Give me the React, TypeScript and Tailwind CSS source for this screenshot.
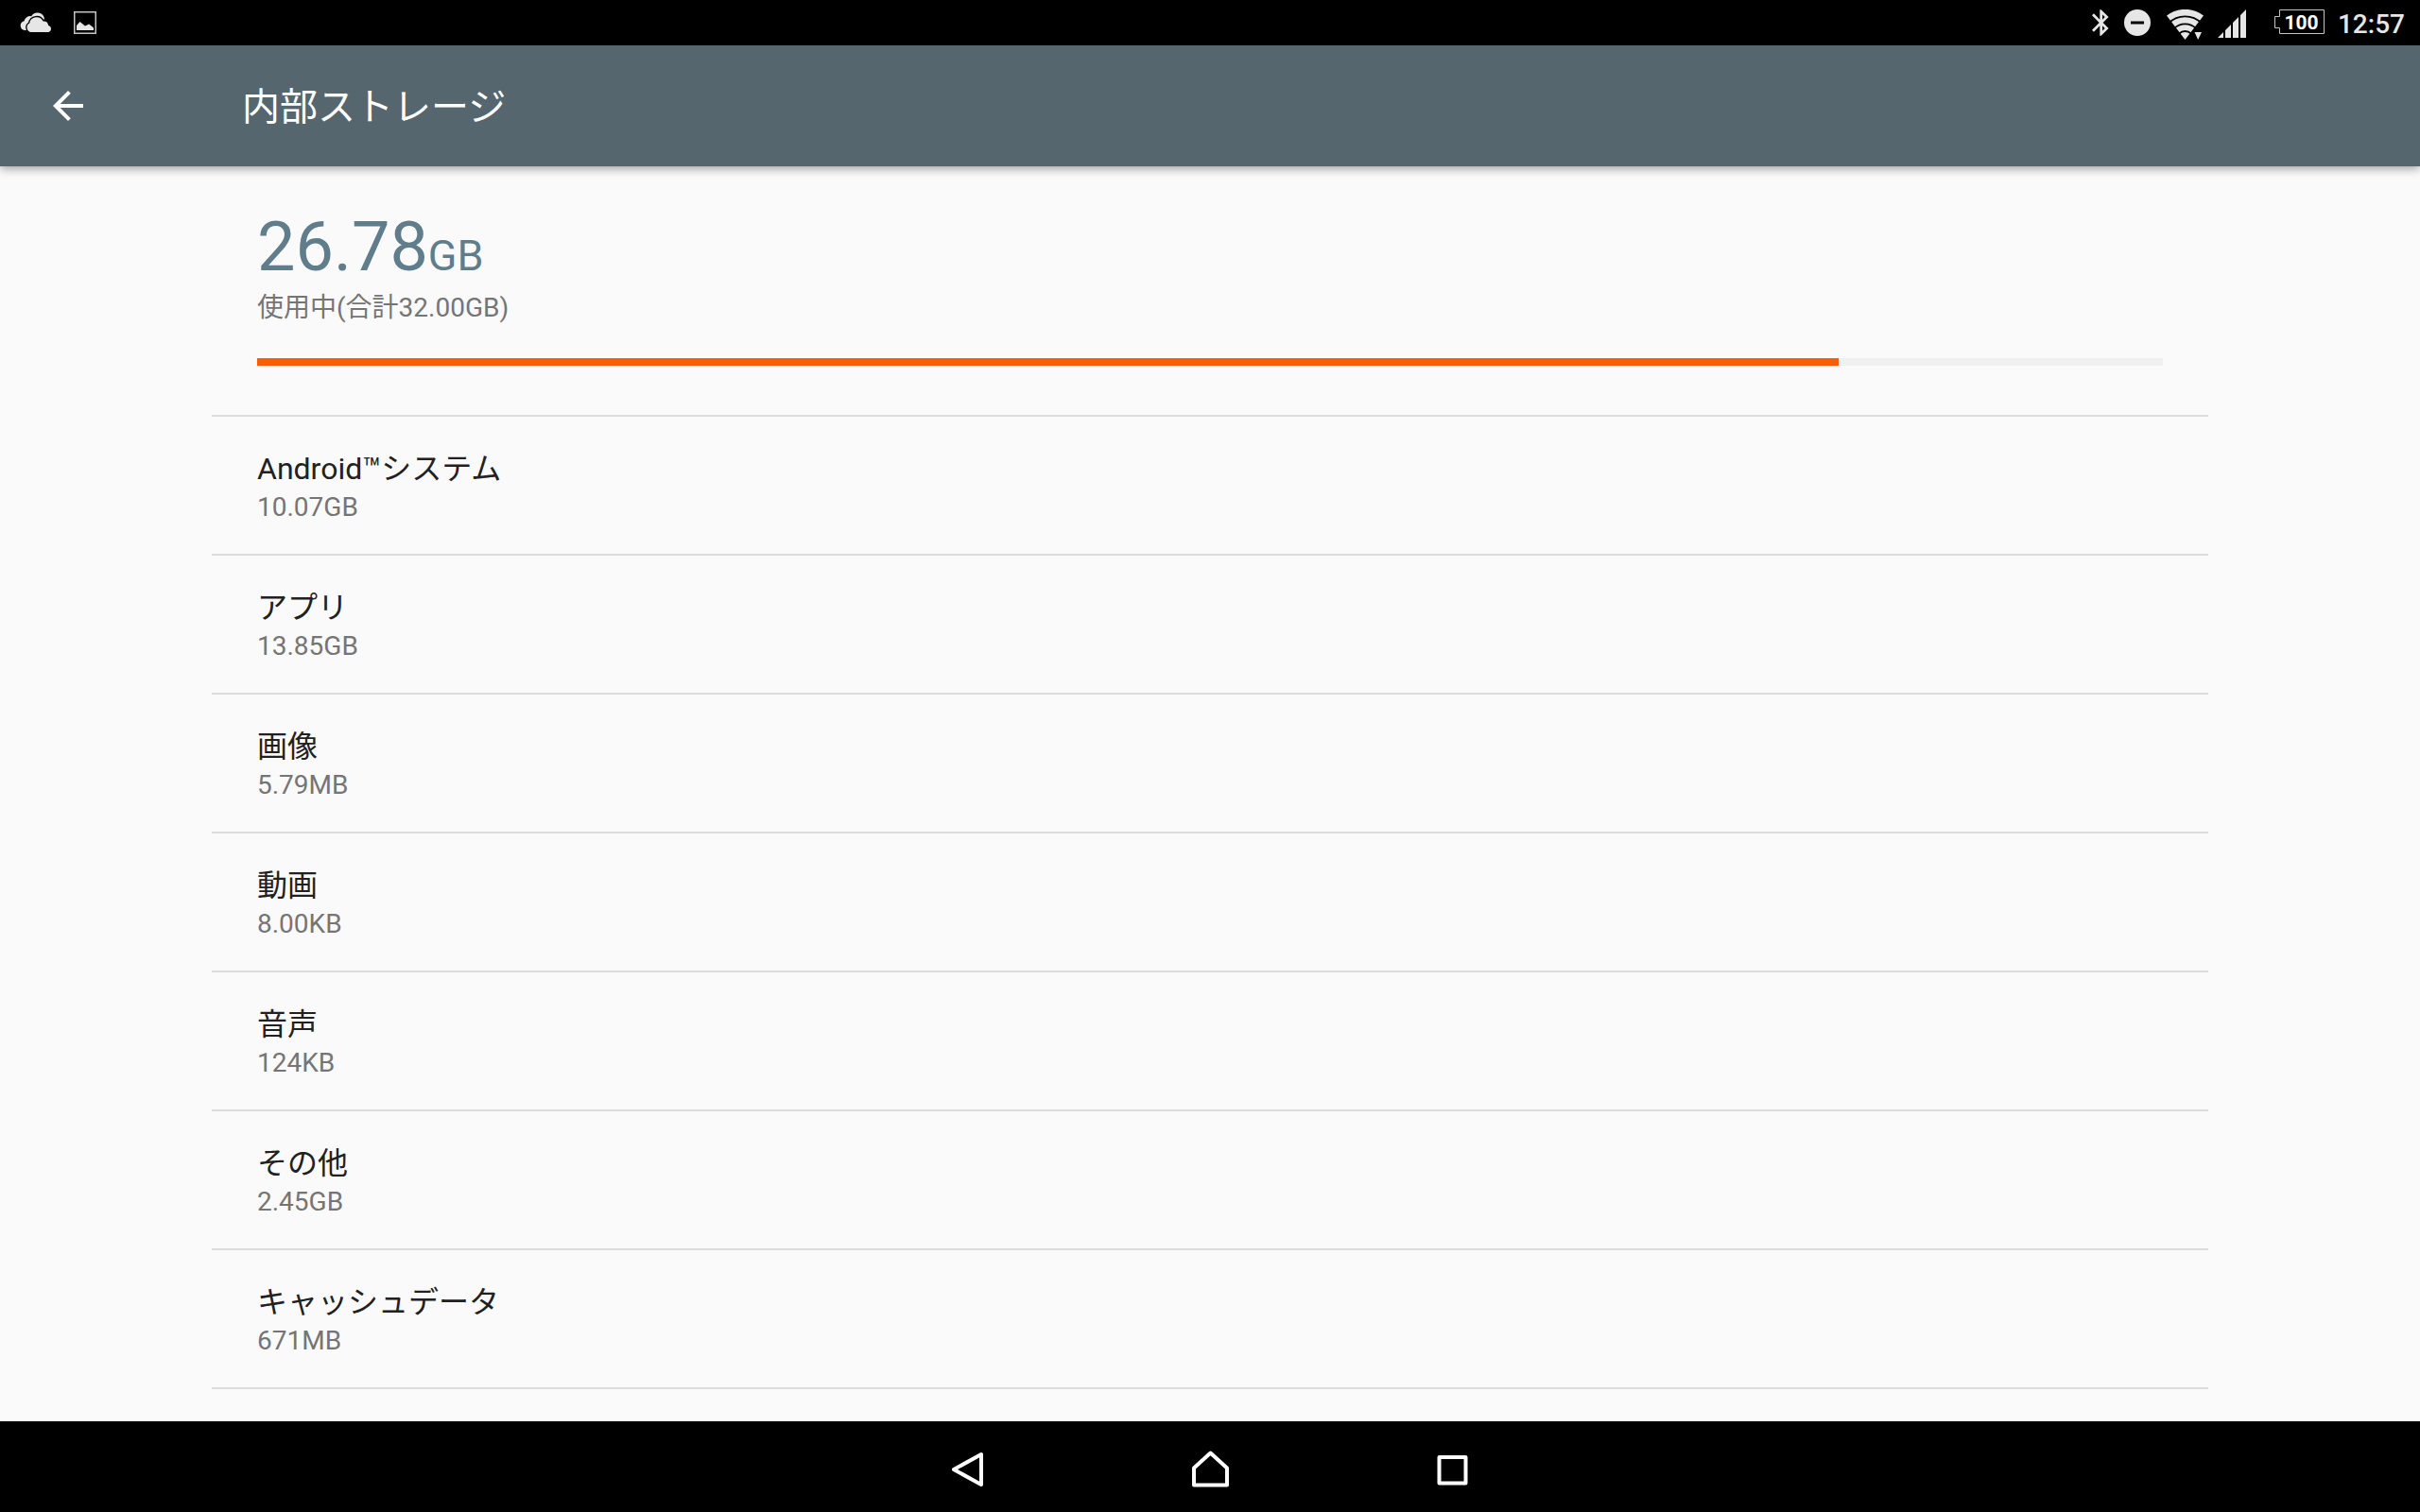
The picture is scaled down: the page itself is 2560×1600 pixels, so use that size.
const TOTAL_GB = 32
const USED_GB = 26.78

const CATEGORIES = [
  { id: 'system', label: 'Android™システム', size: '10.07GB' },
  { id: 'apps', label: 'アプリ', size: '13.85GB' },
  { id: 'images', label: '画像', size: '5.79MB' },
  { id: 'videos', label: '動画', size: '8.00KB' },
  { id: 'audio', label: '音声', size: '124KB' },
  { id: 'other', label: 'その他', size: '2.45GB' },
  { id: 'cache', label: 'キャッシュデータ', size: '671MB' },
]

function CloudIcon() {
  return (
    <svg viewBox="0 0 34 22" className="h-[22px] w-[34px]" fill="#e6e6e6">
      <path d="M5 19a5 5 0 0 1-.5-9.8A6.6 6.6 0 0 1 12 4.2 7.6 7.6 0 0 1 26 6.5L22 14 10 19Z" />
      <path
        d="M12 21a5 5 0 0 1-1.8-9.4A7.6 7.6 0 0 1 24.6 9.6 5.3 5.3 0 0 1 30.2 14 3.6 3.6 0 0 1 30.2 21Z"
        stroke="#000"
        strokeWidth="2.6"
      />
      <path d="M12 21a5 5 0 0 1-1.8-9.4A7.6 7.6 0 0 1 24.6 9.6 5.3 5.3 0 0 1 30.2 14 3.6 3.6 0 0 1 30.2 21Z" />
    </svg>
  )
}

function PictureIcon() {
  return (
    <svg viewBox="0 0 24 24" className="size-6">
      <rect x="0.75" y="0.75" width="22.5" height="22.5" fill="none" stroke="#c4c4c4" strokeWidth="1.5" />
      <path d="M3 20v-5l3.5-4 5.5 4.6 4.2-2L21 17.5V20Z" fill="#e6e6e6" />
    </svg>
  )
}

function BluetoothIcon() {
  return (
    <svg viewBox="5 2 13 20" className="h-7 w-[18px]" fill="#e6e6e6">
      <path d="M17.71 7.71 12 2h-1v7.59L6.41 5 5 6.41 10.59 12 5 17.59 6.41 19 11 14.41V22h1l5.71-5.71-4.3-4.29 4.3-4.29zM13 5.83l1.88 1.88L13 9.59V5.83zm1.88 10.46L13 18.17v-3.76l1.88 1.88z" />
    </svg>
  )
}

function DoNotDisturbIcon() {
  return (
    <svg viewBox="0 0 28 28" className="size-7">
      <circle cx="14" cy="14" r="14" fill="#e6e6e6" />
      <path d="M7 14h14" stroke="#000" strokeWidth="3" />
    </svg>
  )
}

function WifiIcon() {
  return (
    <svg viewBox="0 0 39 32" className="h-8 w-[39px]">
      <path d="M0 6.5A32 32 0 0 1 39 6.5L19.5 32Z" fill="#e6e6e6" />
      <g fill="none" stroke="#000" strokeWidth="1.8">
        <circle cx="19.5" cy="32" r="24.6" />
        <circle cx="19.5" cy="32" r="16.6" />
        <circle cx="19.5" cy="32" r="9" />
      </g>
      <path d="M29.5 24h7.5L33.2 32Z" fill="#e6e6e6" />
    </svg>
  )
}

function SignalIcon() {
  return (
    <svg viewBox="0 0 30 30" className="size-[30px]" fill="#e6e6e6">
      <path d="M0 30l6-6v6ZM8 30v-8l6-6v14ZM16 30V14l6-6v22ZM24 30V6l6-6v30Z" />
    </svg>
  )
}

function Battery({ level }: { level: number }) {
  return (
    <div className="relative flex h-[26px] w-[53px] items-end justify-center pl-1">
      <svg viewBox="0 0 53 26" className="absolute inset-0 size-full" fill="none" stroke="#c4c4c4">
        <path d="M5.5 .5H52.5V25.5H5.5V19.5H.5V7.5H5.5Z" />
      </svg>
      <span className="text-[21px] leading-6 font-bold text-white">{level}</span>
    </div>
  )
}

function StatusBar() {
  return (
    <div className="flex h-12 shrink-0 items-start justify-between bg-black pr-4 pl-[21px]">
      <div className="flex h-12 items-center gap-[23px]">
        <CloudIcon />
        <PictureIcon />
      </div>
      <div className="flex items-start pt-2.5">
        <BluetoothIcon />
        <div className="ml-4"><DoNotDisturbIcon /></div>
        <div className="ml-[17px]"><WifiIcon /></div>
        <div className="ml-[15px]"><SignalIcon /></div>
        <div className="ml-[30px]"><Battery level={100} /></div>
        <time className="ml-3.5 text-[28px] leading-8 font-medium text-[#e6e6e6]">12:57</time>
      </div>
    </div>
  )
}

function AppBar({ title }: { title: string }) {
  return (
    <header className="z-10 flex h-32 shrink-0 items-center bg-[#56666e] pl-12 text-white shadow-[0_2px_10px_rgba(0,0,0,0.4)]">
      <button type="button" aria-label="戻る" className="size-12">
        <svg viewBox="0 0 24 24" className="size-12" fill="currentColor">
          <path d="M20 11H7.83l5.59-5.59L12 4l-8 8 8 8 1.41-1.41L7.83 13H20v-2z" />
        </svg>
      </button>
      <h1 className="ml-40 pt-1 text-[40px] leading-[48px]">{title}</h1>
    </header>
  )
}

function Summary() {
  const percent = Math.floor((USED_GB / TOTAL_GB) * 100)

  return (
    <section className="border-b-2 border-[#dcdcdc] px-12 pt-[50px] pb-[52px]">
      <p className="text-[72px] leading-[72px] text-[#607d8b]">
        {USED_GB}
        <span className="text-[45px] leading-[45px]">GB</span>
      </p>
      <p className="mt-2 text-[28px] leading-10 text-[#757575]">使用中(合計{TOTAL_GB.toFixed(2)}GB)</p>
      <div
        role="progressbar"
        aria-label="使用中"
        aria-valuenow={percent}
        aria-valuemin={0}
        aria-valuemax={100}
        className="mt-[33px] h-2 bg-[#f0f0f0]"
      >
        <div className="h-full bg-[#ff5c0a]" style={{ width: `${percent}%` }} />
      </div>
    </section>
  )
}

function NavBar() {
  return (
    <nav className="flex h-24 shrink-0 justify-center bg-black text-white">
      <button type="button" aria-label="戻る" className="flex w-64 items-center justify-center">
        <svg viewBox="0 0 48 48" className="size-12" fill="none" stroke="currentColor" strokeWidth="4" strokeLinejoin="round">
          <path d="M38 11v32L9 27Z" />
        </svg>
      </button>
      <button type="button" aria-label="ホーム" className="flex w-64 items-center justify-center">
        <svg viewBox="0 0 48 48" className="size-12" fill="none" stroke="currentColor" strokeWidth="4" strokeLinejoin="round">
          <path d="M24.5 9.5 42 25.5v18H7v-18Z" />
        </svg>
      </button>
      <button type="button" aria-label="アプリ履歴" className="flex w-64 items-center justify-center">
        <svg viewBox="0 0 48 48" className="size-12" fill="none" stroke="currentColor" strokeWidth="4" strokeLinejoin="round">
          <path d="M10.5 14h28v27.5h-28Z" />
        </svg>
      </button>
    </nav>
  )
}

export default function App() {
  return (
    <div
      lang="ja"
      className="flex h-screen flex-col bg-[#fafafa] font-['Roboto','Noto_Sans_CJK_JP',sans-serif]"
    >
      <StatusBar />
      <AppBar title="内部ストレージ" />
      <main className="min-h-0 flex-1 overflow-hidden px-56">
        <Summary />
        <ul>
          {CATEGORIES.map((c) => (
            <li key={c.id} className="border-b-2 border-[#dcdcdc]">
              <button type="button" className="block w-full px-12 pt-[34px] pb-[29px] text-left">
                <span className="block text-[32px] leading-[42px] text-[#212121]">{c.label}</span>
                <span className="block text-[28px] leading-10 text-[#757575]">{c.size}</span>
              </button>
            </li>
          ))}
        </ul>
      </main>
      <NavBar />
    </div>
  )
}
